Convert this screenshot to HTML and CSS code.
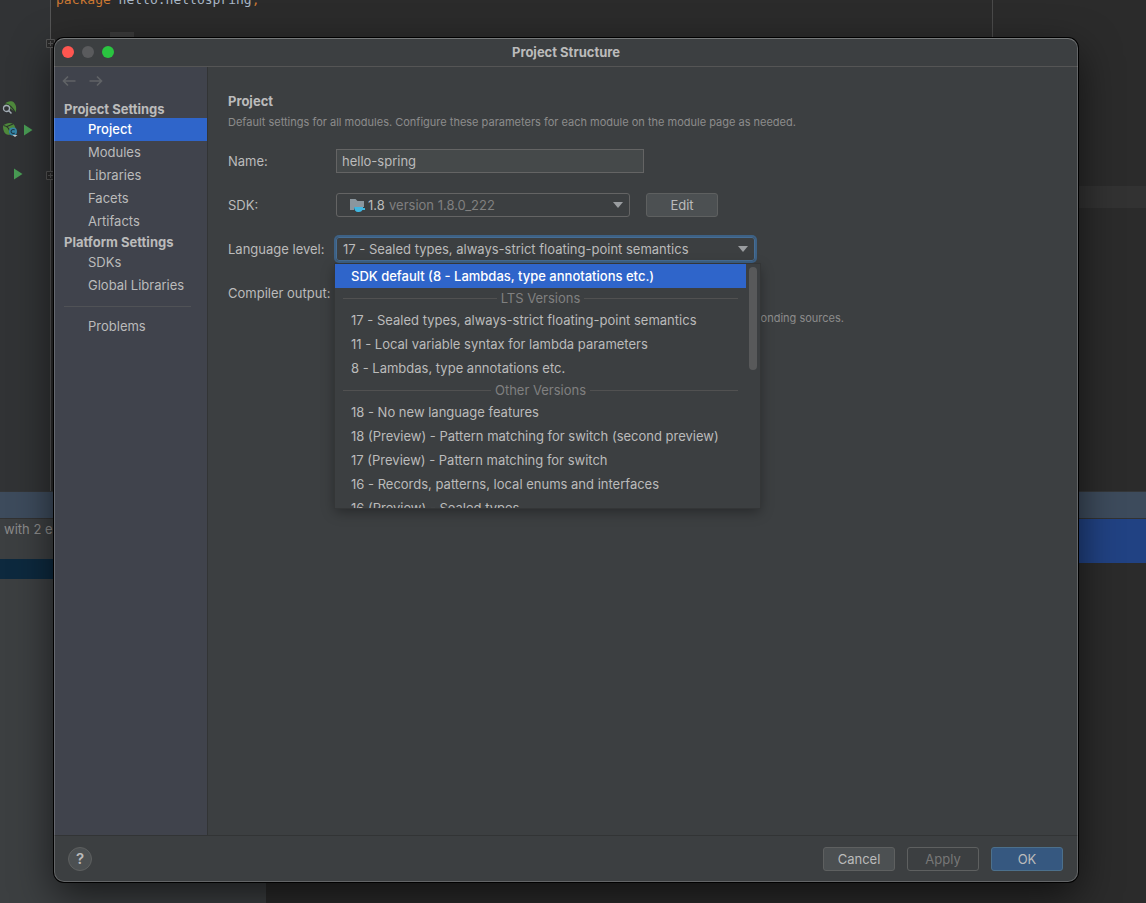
FILE: index.html
```html
<!DOCTYPE html>
<html lang="en">
<head>
<meta charset="utf-8">
<title>Project Structure</title>
<link rel="stylesheet" href="styles.css">
</head>
<body>
<div class="ide">
  <div class="editor">
    <div class="gutter">
      <div class="gutter-row bean-row">
        <svg width="16" height="16" viewBox="0 0 16 16"><path d="M2.500 4C5 1 8.500 .8 10.500 1.500C14 3.500 15 8 13.500 12.500Z" fill="#4f8a3c"/><path d="M2.500 3.500C7 4 11 8 13.500 13" stroke="#2d3330" stroke-width="1.200" fill="none"/><circle cx="4.500" cy="8.500" r="3" fill="#313335" stroke="#a3adb5" stroke-width="1.300"/><path d="M6.800 10.800L9.500 13.500" stroke="#a3adb5" stroke-width="1.500"/></svg>
      </div>
      <div class="gutter-row">
        <svg width="16" height="16" viewBox="0 0 16 16"><path d="M1 3.500C5 .5 10 0 12.500 3.500C14 6 14 9 13.500 12L8 13C3 13 1 10 1 3.500Z" fill="#4f8a3c"/><path d="M1.500 3.500C6 4 8 7 8.500 13M5 4.500L11 2" stroke="#2b332d" stroke-width="1.200" fill="none"/><circle cx="11" cy="9.500" r="4" fill="#3585a6"/><path d="M12.600 8.200A2 2 0 1 0 12.600 10.800" fill="none" stroke="#1f3844" stroke-width="1.100"/><path d="M10.500 13h5l-2.500 2z" fill="#c3c7ca"/></svg>
        <svg width="10" height="12" viewBox="0 0 10 12"><path d="M1 .5L9.500 6L1 11.500Z" fill="#499c54"/></svg>
      </div>
      <div class="gutter-row run-row">
        <svg width="10" height="12" viewBox="0 0 10 12"><path d="M1 .5L9.500 6L1 11.500Z" fill="#499c54"/></svg>
      </div>
      <svg class="fold fold-top" width="9" height="9" viewBox="0 0 9 9"><path d="M.5.5h8v8h-8zM2 4.500h5M4.500 2v5" fill="#2b2b2b" stroke="#555"/></svg>
      <svg class="fold fold-bottom" width="9" height="9" viewBox="0 0 9 9"><path d="M.5.5h8v8h-8zM2 4.500h5M4.500 2v5" fill="#2b2b2b" stroke="#555"/></svg>
    </div>
    <div class="code">
      <code class="code-line"><span class="keyword">package</span> hello.hellospring<span class="keyword">;</span></code>
      <div class="folded"></div>
    </div>
    <div class="margin"><div class="caret-row"></div></div>
  </div>
  <div class="tool-header"></div>
  <div class="tool">
    <div class="tree">
      <div class="tree-text">with 2 e</div>
      <div class="tree-selected"></div>
    </div>
    <div class="console"><div class="console-selected"></div></div>
  </div>
</div>

<main class="dialog">
  <header class="titlebar">
    <div class="lights"><span class="light close"></span><span class="light minimize"></span><span class="light maximize"></span></div>
    <h1 class="title">Project Structure</h1>
  </header>
  <div class="body">
    <nav class="sidebar">
      <div class="history">
        <svg width="14" height="12" viewBox="0 0 14 12"><path d="M13.500 6H1.500M6 1.500L1.500 6L6 10.500" fill="none" stroke="#606366" stroke-width="1.600"/></svg>
        <svg width="14" height="12" viewBox="0 0 14 12"><path d="M.5 6H12.500M8 1.500L12.500 6L8 10.500" fill="none" stroke="#606366" stroke-width="1.600"/></svg>
      </div>
      <h2 class="group">Project Settings</h2>
      <a class="item active" href="#project">Project</a>
      <a class="item" href="#modules">Modules</a>
      <a class="item" href="#libraries">Libraries</a>
      <a class="item" href="#facets">Facets</a>
      <a class="item" href="#artifacts">Artifacts</a>
      <h2 class="group">Platform Settings</h2>
      <a class="item" href="#sdks">SDKs</a>
      <a class="item" href="#global">Global Libraries</a>
      <hr class="divider">
      <a class="item" href="#problems">Problems</a>
    </nav>
    <section class="content" id="project">
      <h2 class="heading">Project</h2>
      <p class="note">Default settings for all modules. Configure these parameters for each module on the module page as needed.</p>
      <form class="form">
        <label for="name">Name:</label>
        <input class="field name" id="name" type="text" value="hello-spring">

        <label for="sdk">SDK:</label>
        <div class="sdk-row">
          <div class="combo sdk">
            <svg width="17" height="16" viewBox="0 0 17 16"><path d="M1 2h5.500l2 2H15v6H5v3H1Z" fill="#8a969e"/><path d="M5 10h9v1h2v2h-2.500Q12.500 15 10 15H9Q5.500 15 5 10Z" fill="#40b6e0"/></svg>
            <select class="select" id="sdk"><option>1.8</option></select>
            <span class="version">version 1.8.0_222</span>
            <svg class="arrow" width="10" height="6" viewBox="0 0 10 6"><path d="M0 0h10L5 6Z" fill="#9a9da0"/></svg>
          </div>
          <button class="button" type="button">Edit</button>
        </div>

        <label for="level">Language level:</label>
        <div class="combo level">
          <select class="select grow" id="level"><option>17 - Sealed types, always-strict floating-point semantics</option></select>
          <svg class="arrow" width="10" height="6" viewBox="0 0 10 6"><path d="M0 0h10L5 6Z" fill="#9a9da0"/></svg>
          <div class="popup">
            <ul class="options" role="listbox" aria-label="Language level">
              <li class="option chosen" role="option" aria-selected="true">SDK default (8 - Lambdas, type annotations etc.)</li>
              <li class="separator" role="presentation">LTS Versions</li>
              <li class="option" role="option">17 - Sealed types, always-strict floating-point semantics</li>
              <li class="option" role="option">11 - Local variable syntax for lambda parameters</li>
              <li class="option" role="option">8 - Lambdas, type annotations etc.</li>
              <li class="separator" role="presentation">Other Versions</li>
              <li class="option" role="option">18 - No new language features</li>
              <li class="option" role="option">18 (Preview) - Pattern matching for switch (second preview)</li>
              <li class="option" role="option">17 (Preview) - Pattern matching for switch</li>
              <li class="option" role="option">16 - Records, patterns, local enums and interfaces</li>
              <li class="option" role="option">16 (Preview) - Sealed types</li>
            </ul>
            <div class="track"><div class="thumb"></div></div>
          </div>
        </div>

        <label for="output">Compiler output:</label>
        <input class="field output" id="output" type="text">
      </form>
      <p class="note hint">Used for module subdirectories, Production and Test directories for the corresponding sources.</p>
    </section>
  </div>
  <footer class="footer">
    <button class="help" type="button" aria-label="Help">?</button>
    <button class="button" type="button">Cancel</button>
    <button class="button disabled" type="button" disabled>Apply</button>
    <button class="button primary" type="button">OK</button>
  </footer>
</main>
</body>
</html>
```
FILE: styles.css
```css
* { box-sizing: border-box; }

body {
  margin: 0;
  height: 100vh;
  overflow: hidden;
  position: relative;
  background: #2b2b2b;
  color: #bbbbbb;
  font: 13px/18px Inter, "Liberation Sans", sans-serif;
}

h1, h2, p, ul { margin: 0; padding: 0; font-size: inherit; }
svg { flex: none; }
button, input, select { font: inherit; color: inherit; }

/* Editor and tool window behind the dialog */
.ide { height: 100%; display: flex; flex-direction: column; }
.editor { flex: 491; display: flex; min-height: 0; overflow: hidden; }
.gutter {
  position: relative;
  width: 51px;
  padding-top: 97px;
  background: #313335;
  border-right: 1px solid #555555;
}
.gutter-row { display: flex; align-items: center; gap: 5px; height: 22px; padding-left: 2px; }
.run-row { margin-top: 22px; padding-left: 13px; }
.fold { position: absolute; right: -5px; }
.fold-top { top: 39px; }
.fold-bottom { top: 171px; }
.code { flex: 1; padding-left: 5px; border-right: 1px solid #4a4a4a; overflow: hidden; }
.code-line {
  display: block;
  height: 32px;
  margin-top: -10px;
  font: 13px/20px "DejaVu Sans Mono", monospace;
  color: #a9b7c6;
}
.keyword { color: #cc7832; }
.folded { width: 24px; height: 22px; margin: 10px 0 0 54px; background: #3b3b3b; }
.margin { width: 153px; padding-top: 186px; }
.caret-row { height: 22px; background: #323232; }
.tool-header {
  height: 28px;
  background: #3d4b5c;
  border-top: 1px solid #343638;
  border-bottom: 1px solid #323232;
}
.tool { flex: 384; display: flex; min-height: 0; }
.tree { width: 266px; background: #3c3f41; }
.tree-text { height: 40px; padding: 1px 0 0 4px; color: #8c8c8c; }
.tree-selected { height: 20px; background: #0d293e; }
.console { flex: 1; }
.console-selected { height: 44px; background: #214283; }

/* Dialog window */
.dialog {
  position: absolute;
  inset: 38px 68px 21px 54px;
  display: flex;
  flex-direction: column;
  padding: 1px 0;
  border-radius: 10px;
  background: #3c3f41;
  box-shadow: 0 0 0 1px #000000, 0 14px 40px rgba(0, 0, 0, 0.6);
}
.dialog::after {
  content: "";
  position: absolute;
  inset: 0;
  border: 1px solid rgba(255, 255, 255, 0.2);
  border-top-color: rgba(255, 255, 255, 0.3);
  border-radius: 10px;
  pointer-events: none;
}
.titlebar {
  display: grid;
  grid-template-columns: 1fr auto 1fr;
  align-items: center;
  height: 28px;
  padding: 0 8px 2px;
  border-bottom: 1px solid #555555;
}
.lights { display: flex; gap: 8px; }
.light { width: 12px; height: 12px; border-radius: 50%; }
.close { background: #ff5650; }
.minimize { background: #5a5b5d; }
.maximize { background: #2ac440; }
.title { font-weight: 700; }

.body { flex: 1; display: flex; min-height: 0; }
.sidebar {
  width: 154px;
  background: #40434c;
  border-right: 1px solid #323435;
}
.history { display: flex; gap: 13px; height: 33px; padding: 8px 8px 0; }
.group { padding-left: 10px; font-weight: 700; line-height: 18px; }
.item {
  display: block;
  padding-left: 34px;
  line-height: 23px;
  color: inherit;
  text-decoration: none;
}
.item.active { background: #2f65ca; color: #ffffff; font-weight: 500; }
.divider { height: 1px; margin: 9px 16px 8px 10px; border: 0; background: #505256; }

.content { flex: 1; min-width: 0; padding: 25px 20px; }
.heading { font-weight: 700; }
.note { margin-top: 4px; color: #8c8c8c; font-size: 11px; line-height: 16px; }
.form {
  display: grid;
  grid-template-columns: 108px 1fr;
  grid-auto-rows: 24px;
  row-gap: 20px;
  align-items: center;
  margin-top: 19px;
  white-space: nowrap;
}
.field {
  height: 24px;
  padding: 0 5px;
  background: #45494a;
  border: 1px solid #646464;
  outline: 0;
}
.name { width: 308px; }
.output { width: 400px; }
.sdk-row { display: flex; gap: 16px; }
.combo {
  position: relative;
  display: flex;
  align-items: center;
  height: 24px;
  padding: 0 6px;
  border: 1px solid #646464;
  border-radius: 3px;
}
.sdk { width: 294px; padding-left: 12px; }
.level { width: 419px; border-color: #466d94; box-shadow: 0 0 0 2px #3d6185; }
.select {
  appearance: none;
  padding: 0;
  border: 0;
  outline: 0;
  background: transparent;
}
.sdk .select { margin: 0 4px 0 2px; }
.grow { flex: 1; min-width: 0; }
.version { color: #808080; }
.arrow { margin-left: auto; }

.popup {
  position: absolute;
  top: 26px;
  left: -2px;
  display: flex;
  width: 425px;
  height: 244px;
  overflow: hidden;
  background: #3c3f41;
  box-shadow: 0 0 0 1px #343637, 0 4px 12px rgba(0, 0, 0, 0.35);
}
.options { flex: 1; list-style: none; }
.option { height: 24px; padding-left: 16px; line-height: 24px; }
.chosen { background: #2f65ca; color: #ffffff; font-weight: 500; }
.separator {
  display: flex;
  align-items: center;
  gap: 4px;
  height: 20px;
  padding: 0 8px;
  color: #808080;
}
.separator::before, .separator::after {
  content: "";
  flex: 1;
  height: 1px;
  background: #515151;
}
.track { width: 14px; padding: 3px; }
.thumb { width: 8px; height: 103px; border-radius: 4px; background: #58595a; }
.hint { width: 508px; margin: 5px 0 0 108px; text-align: right; white-space: nowrap; }

.footer {
  display: flex;
  align-items: center;
  gap: 12px;
  height: 46px;
  padding: 0 15px 0 14px;
  border-top: 1px solid #323435;
}
.button {
  width: 72px;
  height: 24px;
  padding: 0;
  border: 1px solid #5e6060;
  border-radius: 3px;
  background: #4c5052;
}
.disabled { background: transparent; color: #777777; }
.primary { background: #365880; border-color: #4c708c; }
.help {
  width: 24px;
  height: 24px;
  margin-right: auto;
  padding: 0;
  border: 1px solid #5e6060;
  border-radius: 50%;
  background: #4c5052;
  font-size: 15px;
  font-weight: 600;
}
```
